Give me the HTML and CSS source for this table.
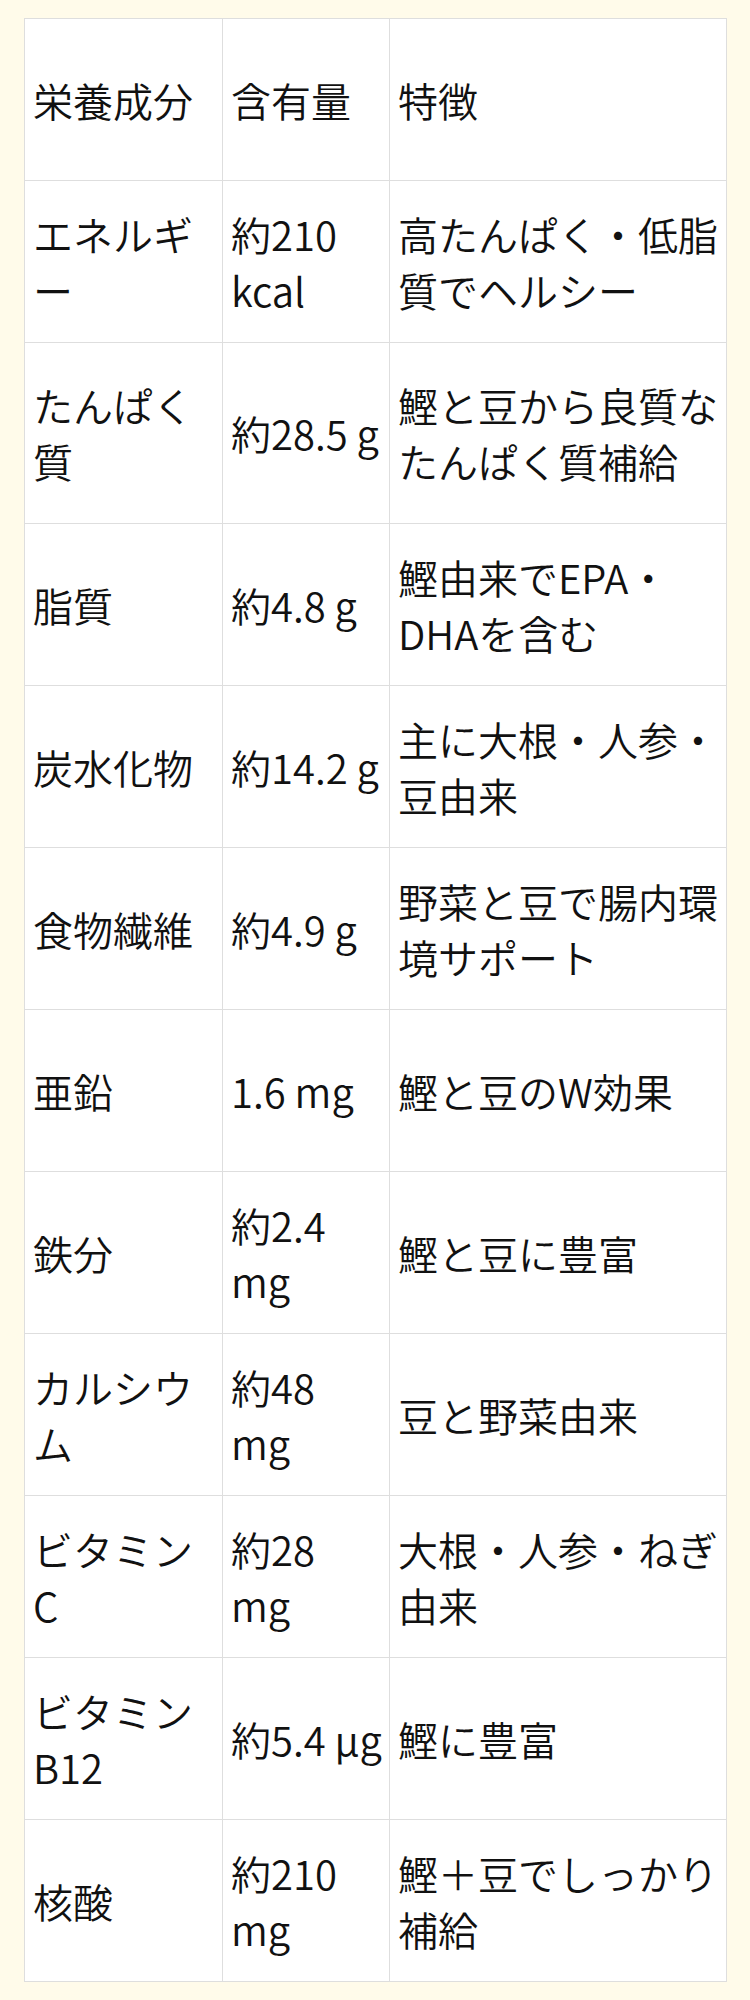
FILE: index.html
```html
<!DOCTYPE html>
<html lang="ja">
<head>
<meta charset="utf-8">
<title>栄養成分</title>
<link rel="stylesheet" href="styles.css">
</head>
<body>
<table class="nutrition">
  <colgroup>
    <col class="col-name">
    <col class="col-amount">
    <col class="col-note">
  </colgroup>
  <thead>
    <tr>
      <th>栄養成分</th>
      <th>含有量</th>
      <th>特徴</th>
    </tr>
  </thead>
  <tbody>
    <tr>
      <td>エネルギー</td>
      <td>約210 kcal</td>
      <td>高たんぱく・低脂質でヘルシー</td>
    </tr>
    <tr class="tall">
      <td>たんぱく質</td>
      <td>約28.5 g</td>
      <td>鰹と豆から良質なたんぱく質補給</td>
    </tr>
    <tr>
      <td>脂質</td>
      <td>約4.8 g</td>
      <td>鰹由来でEPA・DHAを含む</td>
    </tr>
    <tr>
      <td>炭水化物</td>
      <td>約14.2 g</td>
      <td>主に大根・人参・豆由来</td>
    </tr>
    <tr>
      <td>食物繊維</td>
      <td>約4.9 g</td>
      <td>野菜と豆で腸内環境サポート</td>
    </tr>
    <tr>
      <td>亜鉛</td>
      <td>1.6 mg</td>
      <td>鰹と豆のW効果</td>
    </tr>
    <tr>
      <td>鉄分</td>
      <td>約2.4 mg</td>
      <td>鰹と豆に豊富</td>
    </tr>
    <tr>
      <td>カルシウム</td>
      <td>約48 mg</td>
      <td>豆と野菜由来</td>
    </tr>
    <tr>
      <td>ビタミンC</td>
      <td>約28 mg</td>
      <td>大根・人参・ねぎ由来</td>
    </tr>
    <tr>
      <td>ビタミンB12</td>
      <td class="nowrap">約5.4 µg</td>
      <td>鰹に豊富</td>
    </tr>
    <tr>
      <td>核酸</td>
      <td>約210 mg</td>
      <td>鰹＋豆でしっかり補給</td>
    </tr>
  </tbody>
</table>
</body>
</html>
```

FILE: styles.css
```css
html, body {
  margin: 0;
  padding: 0;
  background: #fffbea;
}

body {
  padding: 18px 24px 19px;
  font-family: "Noto Sans CJK JP", "Noto Sans", sans-serif;
  color: #111;
}

.nutrition {
  width: 702px;
  table-layout: fixed;
  border-collapse: collapse;
  background: #ffffff;
  font-size: 40px;
  line-height: 1.4;
  font-weight: 350;
}

.col-name { width: 198px; }
.col-amount { width: 167px; }
.col-note { width: 337px; }

.nutrition th,
.nutrition td {
  border: 1px solid #dedede;
  padding: 0 8px;
  text-align: left;
  vertical-align: middle;
  font-weight: inherit;
}

.nutrition td.nowrap {
  white-space: nowrap;
  padding-right: 0;
}

.nutrition tr {
  height: 162px;
}

.nutrition tr.tall {
  height: 181px;
}
```
